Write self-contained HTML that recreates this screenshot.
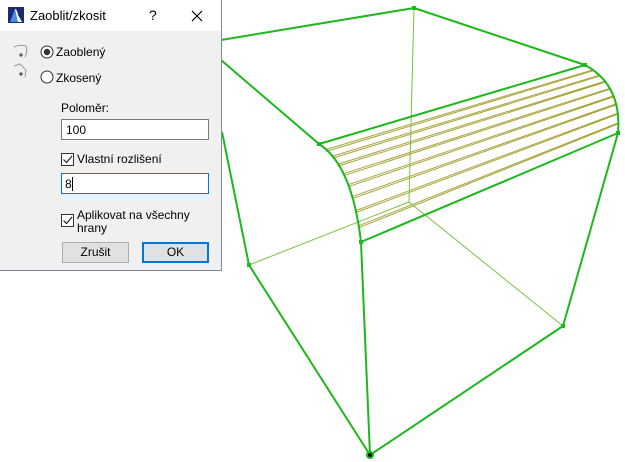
<!DOCTYPE html>
<html><head><meta charset="utf-8"><style>
html,body{margin:0;padding:0;width:625px;height:462px;overflow:hidden;background:#fff;font-family:"Liberation Sans",Arial,sans-serif;}
svg.bg{position:absolute;left:0;top:0}
.dlg{position:absolute;left:0;top:0;width:221px;height:270px;background:#f0f0f0;border-right:1px solid #7b8a9c;border-bottom:1px solid #7b8a9c;font-size:12px;color:#000}
.title{position:absolute;left:0;top:0;width:221px;height:31px;background:#fff}
.t{position:absolute;white-space:nowrap}
.inp{position:absolute;left:61px;width:148px;height:21px;background:#fff;border:1px solid #7a7a7a;box-sizing:border-box}
.cb{position:absolute;width:13px;height:13px;border:1px solid #333;background:#fff;box-sizing:border-box}
.btn{position:absolute;top:242px;width:67px;height:21px;box-sizing:border-box;text-align:center;line-height:19px}
</style></head><body>
<svg class="bg" width="625" height="462">
<g stroke="#a9a33a" stroke-width="1" fill="none">
<path d="M326 149.5L593 69.8M326 151.5L593 70.8M332.6 156.1L599.4 75.2M332.6 158.1L599.4 76.2M338 164.1L604.5 81.4M338 166.1L604.5 82.4M343.6 173.7L609.8 88.3M343.6 175.7L609.8 89.3M348.2 184.7L613.5 95.9M348.2 186.7L613.5 96.9M352 196.7L615.5 104M352 198.7L615.5 105M355.8 210.6L617.8 113.1M355.8 212.6L617.8 114.1M358.8 225.7L618.6 122.7M358.8 227.7L618.6 123.7"/>
</g>
<g stroke="#7ac142" stroke-width="1" fill="none">
<path d="M414 8L409 202M409 202L249 265M409 202L563 326"/>
</g>
<g stroke="#1cb81c" stroke-width="2" fill="none" stroke-linejoin="round">
<path d="M221 40L414 8L585 65M221 60L319 144M222 132L249 265L370 455L563 326L618 133M319 144L585 65M361 242L618 133M361 242L370 455M319 144Q352 165 361 242M585 65Q622 85 618 133"/>
</g>
<g fill="#1cb81c">
<rect x="412" y="6" width="4" height="4"/><rect x="317" y="142" width="4" height="4"/><rect x="583" y="63" width="4" height="4"/><rect x="616" y="131" width="4" height="4"/><rect x="359" y="240" width="4" height="4"/><rect x="247" y="263" width="4" height="4"/><rect x="561" y="324" width="4" height="4"/>
<circle cx="370" cy="455" r="4"/></g>
<circle cx="370" cy="455" r="2" fill="#000"/>
</svg>
<div class="dlg">
<div class="title">
<svg style="position:absolute;left:8px;top:7px" width="16" height="16"><rect x="0" y="0" width="16" height="16" fill="#1d2a6e"/><path d="M2 15L7 2Q9 2 10 8L14 15Z" fill="#4a8de6"/><path d="M7 2Q9 2 10 8L14 15L10 15Z" fill="#fff"/></svg>
<span class="t" style="left:30px;top:8px;font-size:13px">Zaoblit/zkosit</span>
<span class="t" style="left:149px;top:7px;font-size:14px">?</span>
<svg style="position:absolute;left:191px;top:10px" width="12" height="12"><path d="M1 1L11 11M11 1L1 11" stroke="#000" stroke-width="1.2"/></svg>
</div>
<svg style="position:absolute;left:12px;top:43px" width="20" height="45"><g stroke="#999" fill="none"><path d="M2 4Q8 1 14 3Q16 8 13 14"/><path d="M2 23L8 21L14 27L13 34"/></g><g stroke="#333"><path d="M9 10v4M7 12h4M9 29v4M7 31h4"/></g></svg>
<svg style="position:absolute;left:40px;top:45px" width="14" height="40"><circle cx="7" cy="7" r="6" fill="#fff" stroke="#333"/><circle cx="7" cy="7" r="3.2" fill="#333"/><circle cx="7" cy="32" r="6" fill="#fff" stroke="#333"/></svg>
<span class="t" style="left:56px;top:45px">Zaoblený</span>
<span class="t" style="left:56px;top:71px">Zkosený</span>
<span class="t" style="left:61px;top:101px">Poloměr:</span>
<div class="inp" style="top:119px"><span class="t" style="left:4px;top:3px">100</span></div>
<div class="cb" style="left:61px;top:153px"><svg width="11" height="11"><path d="M1.5 5.5L4.5 8.5L10 2" stroke="#222" fill="none" stroke-width="1.2"/></svg></div>
<span class="t" style="left:77px;top:152px">Vlastní rozlišení</span>
<div class="inp" style="top:173px;border-color:#0078d7"><span class="t" style="left:3px;top:3px">8</span><span style="position:absolute;left:10px;top:3px;width:1px;height:14px;background:#000"></span></div>
<div class="cb" style="left:61px;top:214px"><svg width="11" height="11"><path d="M1.5 5.5L4.5 8.5L10 2" stroke="#222" fill="none" stroke-width="1.2"/></svg></div>
<span class="t" style="left:77px;top:208px">Aplikovat na všechny</span>
<span class="t" style="left:77px;top:221px">hrany</span>
<div class="btn" style="left:62px;background:#e1e1e1;border:1px solid #adadad">Zrušit</div>
<div class="btn" style="left:142px;background:#e1e1e1;border:2px solid #0078d7;line-height:17px">OK</div>
</div>
</body></html>
